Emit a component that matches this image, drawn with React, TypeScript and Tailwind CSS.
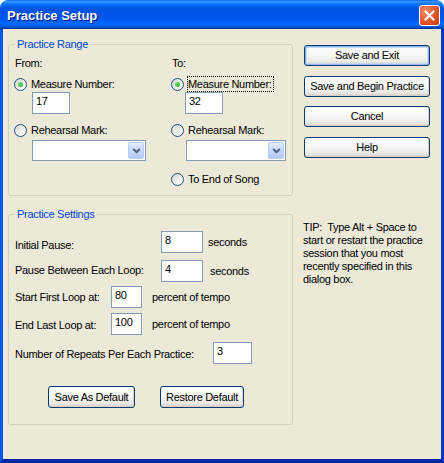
import React from "react";

function Radio({ checked }: { checked?: boolean }) {
  return (
    <span className="flex h-[13px] w-[13px] shrink-0 items-center justify-center rounded-full border border-[#1c5180] bg-[linear-gradient(135deg,#d6d5cf_0%,#f2f2ee_60%,#ffffff_100%)]">
      {checked && (
        <span className="h-[5px] w-[5px] rounded-full bg-[radial-gradient(circle_at_35%_35%,#6fe06b,#21a121)]" />
      )}
    </span>
  );
}

function RadioRow({
  label,
  checked,
  focus,
  className = "",
}: {
  label: string;
  checked?: boolean;
  focus?: boolean;
  className?: string;
}) {
  return (
    <div className={`flex h-[16px] items-center ${className}`}>
      <Radio checked={checked} />
      {focus ? (
        <span className="ml-[3px] border border-dotted border-black pr-[1px] leading-[14px]">{label}</span>
      ) : (
        <span className="ml-[4px]">{label}</span>
      )}
    </div>
  );
}

function TextBox({ value, className = "" }: { value: string; className?: string }) {
  return (
    <div className={`h-[22px] shrink-0 border border-[#7f9db9] bg-white pl-[3px] pt-[2px] ${className}`}>
      {value}
    </div>
  );
}

function Combo({ className = "" }: { className?: string }) {
  return (
    <div className={`flex h-[21px] items-center justify-end border border-[#7f9db9] bg-white p-[1px] ${className}`}>
      <div className="flex h-[17px] w-[16px] items-center justify-center rounded-[2px] border border-[#b6cdf7] bg-[linear-gradient(180deg,#e3ebfd_0%,#c5d6fa_55%,#b4c9f6_100%)]">
        <svg width="9" height="6" viewBox="0 0 9 6">
          <path d="M1.2 1 L4.5 4.2 L7.8 1" stroke="#4d6185" strokeWidth="2" fill="none" />
        </svg>
      </div>
    </div>
  );
}

function Btn({
  children,
  className = "",
  isDefault,
}: {
  children: React.ReactNode;
  className?: string;
  isDefault?: boolean;
}) {
  return (
    <div
      className={`flex h-[21px] shrink-0 items-center justify-center whitespace-nowrap rounded-[3px] border border-[#003c74] bg-[linear-gradient(180deg,#ffffff_0%,#f7f7f4_45%,#ecebe6_80%,#d6d0c5_100%)] ${
        isDefault
          ? "shadow-[inset_0_0_0_1px_#8fb2ec,inset_0_0_0_2px_#c4d7f7]"
          : "shadow-[inset_-1px_-1px_0_#d6d0c5]"
      } ${className}`}
    >
      {children}
    </div>
  );
}

function Group({
  title,
  className = "",
  children,
}: {
  title: string;
  className?: string;
  children: React.ReactNode;
}) {
  return (
    <div className={`relative rounded-[3px] border border-[#d0d0bf] ${className}`}>
      <span className="absolute left-[6px] top-[-7px] bg-[#ece9d8] px-[2px] text-[#0046d5]">{title}</span>
      {children}
    </div>
  );
}

export default function App() {
  return (
    <div className="flex h-[463px] w-[444px] flex-col font-['Liberation_Sans',Arial,sans-serif] text-[11px] leading-[13px] tracking-[-0.3px] text-black">
      {/* Title bar */}
      <div className="flex h-[29px] shrink-0 items-start justify-between rounded-t-[8px] bg-[linear-gradient(180deg,#0058ee_0%,#3593ff_4%,#288eff_8%,#127dff_12%,#036ffc_16%,#0262ee_22%,#0057e5_28%,#0054e3_34%,#0055eb_60%,#005bf5_70%,#026afe_80%,#0062ef_88%,#0052d6_93%,#0040ab_97%,#003092_100%)] pl-[7px] pr-[4px]">
        <span className="mt-[8px] text-[13px] font-bold leading-[15px] tracking-[0px] text-white [text-shadow:1px_1px_0_#0a1883]">
          Practice Setup
        </span>
        <div className="mt-[5px] flex h-[21px] w-[21px] items-center justify-center rounded-[3px] border border-white bg-[radial-gradient(circle_at_30%_30%,#f08f6c_0%,#e0542a_55%,#c23c18_100%)]">
          <svg width="11" height="11" viewBox="0 0 11 11">
            <path d="M1.5 1.5 L9.5 9.5 M9.5 1.5 L1.5 9.5" stroke="#ffffff" strokeWidth="2" strokeLinecap="square" />
          </svg>
        </div>
      </div>

      {/* Client */}
      <div className="flex flex-1 border-x-[3px] border-b-[4px] border-l-[#0057ea] border-r-[#0035c8] border-b-[#0027a8] bg-[#ece9d8] pl-[5px]">
        {/* Left column */}
        <div className="flex w-[285px] flex-col pt-[15px]">
          <Group title="Practice Range" className="h-[152px]">
            <div className="flex pl-[5px] pt-[12px]">
              {/* From column */}
              <div className="flex w-[157px] flex-col">
                <span className="ml-[1px]">From:</span>
                <RadioRow label="Measure Number:" checked className="mt-[6px]" />
                <TextBox value="17" className="ml-[18px] w-[38px]" />
                <RadioRow label="Rehearsal Mark:" className="mt-[8px]" />
                <Combo className="ml-[18px] mt-[2px] w-[114px]" />
              </div>
              {/* To column */}
              <div className="flex flex-col">
                <span className="ml-[1px]">To:</span>
                <RadioRow label="Measure Number:" checked focus className="mt-[6px]" />
                <TextBox value="32" className="ml-[14px] w-[38px]" />
                <RadioRow label="Rehearsal Mark:" className="mt-[8px]" />
                <Combo className="ml-[15px] mt-[2px] w-[100px]" />
                <RadioRow label="To End of Song" className="mt-[10px]" />
              </div>
            </div>
          </Group>

          <Group title="Practice Settings" className="mt-[18px] h-[211px]">
            <div className="flex flex-col pl-[6px] pt-[16px]">
              <div className="flex items-start">
                <span className="mt-[8px] w-[146px]">Initial Pause:</span>
                <TextBox value="8" className="w-[42px]" />
                <span className="ml-[5px] mt-[5px]">seconds</span>
              </div>
              <div className="mt-[7px] flex items-start">
                <span className="mt-[4px] w-[146px]">Pause Between Each Loop:</span>
                <TextBox value="4" className="w-[42px]" />
                <span className="ml-[7px] mt-[5px]">seconds</span>
              </div>
              <div className="mt-[4px] flex items-start">
                <span className="mt-[5px] w-[96px]">Start First Loop at:</span>
                <TextBox value="80" className="w-[31px]" />
                <span className="ml-[10px] mt-[5px]">percent of tempo</span>
              </div>
              <div className="mt-[5px] flex items-start">
                <span className="mt-[6px] w-[96px]">End Last Loop at:</span>
                <TextBox value="100" className="w-[31px]" />
                <span className="ml-[10px] mt-[5px]">percent of tempo</span>
              </div>
              <div className="mt-[7px] flex items-start">
                <span className="mt-[6px] w-[198px]">Number of Repeats Per Each Practice:</span>
                <TextBox value="3" className="w-[39px]" />
              </div>
              <div className="ml-[33px] mt-[22px] flex gap-[25px]">
                <Btn className="h-[22px] w-[87px]">Save As Default</Btn>
                <Btn className="h-[22px] w-[84px]">Restore Default</Btn>
              </div>
            </div>
          </Group>
        </div>

        {/* Right column */}
        <div className="ml-[11px] flex w-[126px] flex-col pt-[16px]">
          <Btn isDefault>Save and Exit</Btn>
          <Btn className="mt-[10px]">Save and Begin Practice</Btn>
          <Btn className="mt-[9px]">Cancel</Btn>
          <Btn className="mt-[10px]">Help</Btn>
          <div className="-ml-[1px] mt-[63px] w-max whitespace-nowrap">
            TIP:&nbsp; Type Alt + Space to
            <br />
            start or restart the practice
            <br />
            session that you most
            <br />
            recently specified in this
            <br />
            dialog box.
          </div>
        </div>
      </div>
    </div>
  );
}
